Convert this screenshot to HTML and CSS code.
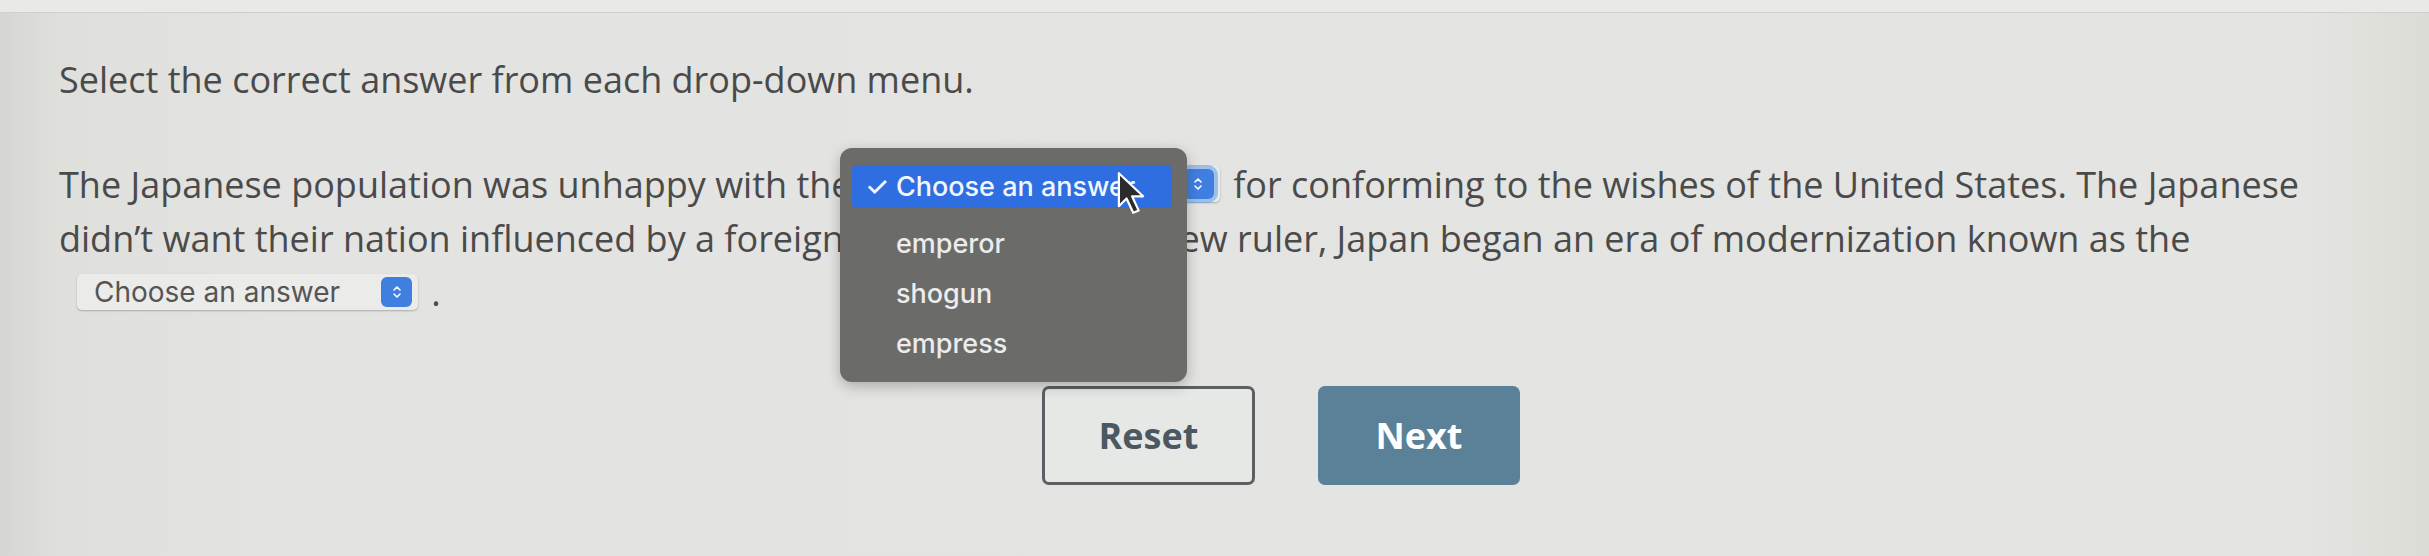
FILE: index.html
```html
<!DOCTYPE html>
<html lang="en">
<head>
  <meta charset="UTF-8" />
  <meta name="viewport" content="width=device-width, initial-scale=1.0"/>
  <title>Drop-down question</title>
  <link rel="stylesheet" href="styles.css">
</head>
<body>

  <div class="topbar"></div>

  <!-- Question -->
  <div class="question">
    <p class="prompt">Select the correct answer from each drop-down menu.</p>

    <p class="passage">
      The Japanese population was unhappy with the
      <span class="dropdown is-open">
        <span class="dropdown-label">Choose an answer</span>
        <span class="stepper">
          <svg viewBox="0 0 12 16" width="12" height="16"><path d="M3 6l3-3 3 3M3 10l3 3 3-3" fill="none" stroke="#fff" stroke-width="1.6" stroke-linecap="round" stroke-linejoin="round"/></svg>
        </span>

        <!-- open menu -->
        <span class="menu">
          <span class="menu-item selected"><span class="check">✓</span>Choose an answer</span>
          <span class="menu-item">emperor</span>
          <span class="menu-item">shogun</span>
          <span class="menu-item">empress</span>
          <svg class="pointer" viewBox="0 0 26 40" width="30" height="44"><path d="M2 2v30l7-7 6 13 5-2-6-13h10z" fill="#2b2b2b" stroke="#fff" stroke-width="2" stroke-linejoin="round"/></svg>
        </span>
      </span>
      for conforming to the wishes of the United States. The Japanese didn’t want their nation influenced by a foreign power. Under the new ruler, Japan began an era of modernization known as the
      <span class="dropdown">
        <span class="dropdown-label">Choose an answer</span>
        <span class="stepper">
          <svg viewBox="0 0 12 16" width="12" height="16"><path d="M3 6l3-3 3 3M3 10l3 3 3-3" fill="none" stroke="#fff" stroke-width="1.6" stroke-linecap="round" stroke-linejoin="round"/></svg>
        </span>
      </span> .
    </p>
  </div>

  <!-- Buttons -->
  <div class="actions">
    <button class="btn btn-reset">Reset</button>
    <button class="btn btn-next">Next</button>
  </div>

</body>
</html>
```

FILE: styles.css
```css
body {
  margin: 0;
  font-family: "Open Sans", Arial, sans-serif;
  background: linear-gradient(90deg, #d5d6d1 0, #dfdfdc 60px, #e3e3e1 300px, #e4e4e2 2300px, #dcdcd6 2429px);
  color: #4a4a4a;
  height: 556px;
  overflow: hidden;
}

.topbar {
  height: 12px;
  background: #e9e9e8;
  border-bottom: 1px solid #d0d0ce;
}

/* QUESTION */
.question {
  padding: 0 90px 0 59px;
}

.prompt {
  margin: 43px 0 0;
  font-size: 36px;
  line-height: 48px;
}

.passage {
  margin: 54px 0 0;
  font-size: 36px;
  line-height: 54px;
}

/* Drop-down box */
.dropdown {
  position: relative;
  display: inline-flex;
  align-items: center;
  justify-content: space-between;
  width: 341px;
  height: 36px;
  margin: 0 4px 0 18px;
  padding: 0 6px 0 17px;
  box-sizing: border-box;
  vertical-align: 4px;
  background: #ebebea;
  border-radius: 5px;
  box-shadow: 0 1px 2px rgba(0,0,0,0.25);
  font-family: Inter, "Noto Sans", sans-serif;
  font-size: 28px;
  color: #555;
  line-height: 1;
}

.stepper {
  display: flex;
  align-items: center;
  justify-content: center;
  width: 31px;
  height: 30px;
  border-radius: 6px;
  background: #3f7fe0;
}

.is-open .stepper {
  box-shadow: 0 0 0 4px rgba(95,155,232,0.55);
}

/* Open menu */
.menu {
  position: absolute;
  top: -18px;
  left: -39px;
  width: 347px;
  padding: 17px 15px 14px 12px;
  box-sizing: border-box;
  display: flex;
  flex-direction: column;
  background: #6b6b6a;
  border-radius: 12px;
  box-shadow: 0 4px 14px rgba(0,0,0,0.25);
  z-index: 2;
}

.menu-item {
  display: flex;
  align-items: center;
  height: 50px;
  padding-left: 44px;
  border-radius: 5px;
  font-size: 27px;
  font-weight: 500;
  color: #ececec;
}

.menu-item.selected {
  height: 43px;
  margin-bottom: 10px;
  padding-left: 13px;
  background: #2f6ee0;
  color: #f2f6ff;
}

.check {
  width: 31px;
}

.pointer {
  position: absolute;
  top: 23px;
  left: 276px;
}

/* BUTTONS */
.actions {
  display: flex;
  gap: 63px;
  margin: 66px 0 0 1042px;
}

.btn {
  width: 213px;
  height: 99px;
  border-radius: 7px;
  font-family: "Open Sans", Arial, sans-serif;
  font-size: 36px;
  font-weight: bold;
  cursor: pointer;
}

.btn-reset {
  background: #e6e8e6;
  border: 3px solid #5b5f62;
  color: #4c5861;
}

.btn-next {
  width: 202px;
  background: #5a8197;
  border: none;
  color: #fff;
}
```
